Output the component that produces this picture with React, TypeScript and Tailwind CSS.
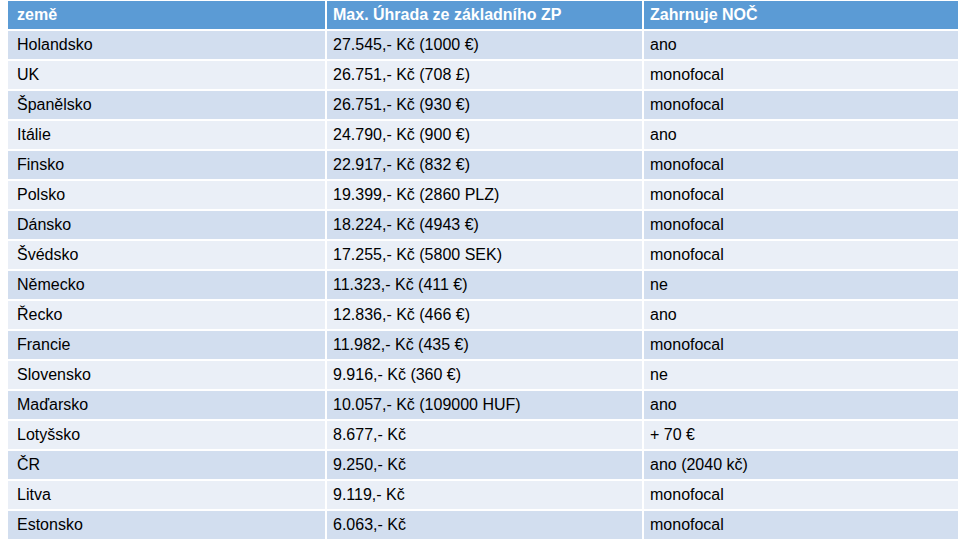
import React from "react";

const rows: [string, string, string][] = [
  ["Holandsko", "27.545,- Kč (1000 €)", "ano"],
  ["UK", "26.751,- Kč (708 £)", "monofocal"],
  ["Španělsko", "26.751,- Kč (930 €)", "monofocal"],
  ["Itálie", "24.790,- Kč (900 €)", "ano"],
  ["Finsko", "22.917,- Kč (832 €)", "monofocal"],
  ["Polsko", "19.399,- Kč (2860 PLZ)", "monofocal"],
  ["Dánsko", "18.224,- Kč (4943 €)", "monofocal"],
  ["Švédsko", "17.255,- Kč (5800 SEK)", "monofocal"],
  ["Německo", "11.323,- Kč (411 €)", "ne"],
  ["Řecko", "12.836,- Kč (466 €)", "ano"],
  ["Francie", "11.982,- Kč (435 €)", "monofocal"],
  ["Slovensko", "9.916,- Kč (360 €)", "ne"],
  ["Maďarsko", "10.057,- Kč (109000 HUF)", "ano"],
  ["Lotyšsko", "8.677,- Kč", "+ 70 €"],
  ["ČR", "9.250,- Kč", "ano (2040 kč)"],
  ["Litva", "9.119,- Kč", "monofocal"],
  ["Estonsko", "6.063,- Kč", "monofocal"],
];

const pad = ["pl-[9px]", "pl-[6px]", "pl-[6px]"];

export default function App() {
  return (
    <div className="w-[960px] h-[540px] bg-white overflow-hidden" style={{ fontFamily: '"Liberation Sans", Arial, sans-serif' }}>
      <div className="ml-[8px] mt-[1px] grid grid-cols-[317px_315px_314px] auto-rows-[28px] gap-[2px] text-[16px]">
        {["země", "Max. Úhrada ze základního ZP", "Zahrnuje NOČ"].map((h, j) => (
          <div key={h} className={"bg-[#5b9bd5] text-white font-bold flex items-center " + pad[j]}>
            {h}
          </div>
        ))}
        {rows.map((r, i) =>
          r.map((c, j) => (
            <div
              key={i + "-" + j}
              className={
                (i % 2 === 0 ? "bg-[#d2deef]" : "bg-[#eaeff7]") +
                " text-black flex items-center " +
                pad[j]
              }
            >
              {c}
            </div>
          ))
        )}
      </div>
    </div>
  );
}
